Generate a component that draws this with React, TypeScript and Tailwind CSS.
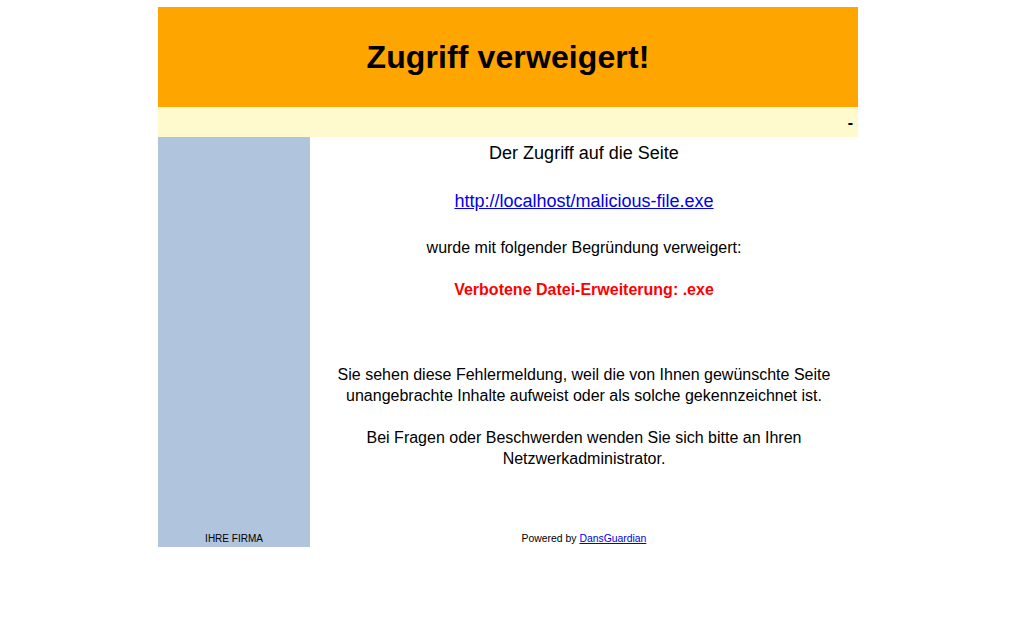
export default function App() {
  return (
    <div className="w-[1014px] h-[630px] bg-white" style={{ fontFamily: '"Liberation Sans", Arial, sans-serif' }}>
      <div className="ml-[158px] pt-[7px] w-[700px] text-black">
        <div className="h-[100px] bg-[#ffa500] flex items-center justify-center">
          <h1 className="text-[32px] font-bold leading-none tracking-[0.1px]">Zugriff verweigert!</h1>
        </div>
        <div className="h-[30px] bg-[#fffacd] flex items-center justify-end pr-[5px] pt-[2px]">
          <span className="text-[16px] font-bold leading-none">-</span>
        </div>
        <div className="flex h-[410px]">
          <div className="w-[152px] bg-[#b0c4de] flex flex-col justify-end items-center pb-[2px]">
            <div className="text-[10px] leading-[12px]">IHRE FIRMA</div>
          </div>
          <div className="flex-1 flex flex-col items-center text-center pt-[6px]">
            <div className="text-[18px] leading-[20px]">Der Zugriff auf die Seite</div>
            <a href="#" className="mt-[28px] text-[18px] leading-[20px] text-[#0000ee] underline">
              http://localhost/malicious-file.exe
            </a>
            <div className="mt-[27px] text-[16px] leading-[20px]">wurde mit folgender Begründung verweigert:</div>
            <div className="mt-[22px] text-[16px] leading-[20px] font-bold text-[#ff0000]">Verbotene Datei-Erweiterung: .exe</div>
            <p className="mt-[64px] text-[16px] leading-[21px] w-[520px]">
              Sie sehen diese Fehlermeldung, weil die von Ihnen gewünschte Seite unangebrachte Inhalte aufweist oder als solche gekennzeichnet ist.
            </p>
            <p className="mt-[21px] text-[16px] leading-[21px] w-[520px]">
              Bei Fragen oder Beschwerden wenden Sie sich bitte an Ihren Netzwerkadministrator.
            </p>
            <div className="mt-auto pb-[2px] text-[10.4px] leading-[12px]">
              Powered by <a href="#" className="text-[#0000ee] underline">DansGuardian</a>
            </div>
          </div>
        </div>
      </div>
    </div>
  );
}
